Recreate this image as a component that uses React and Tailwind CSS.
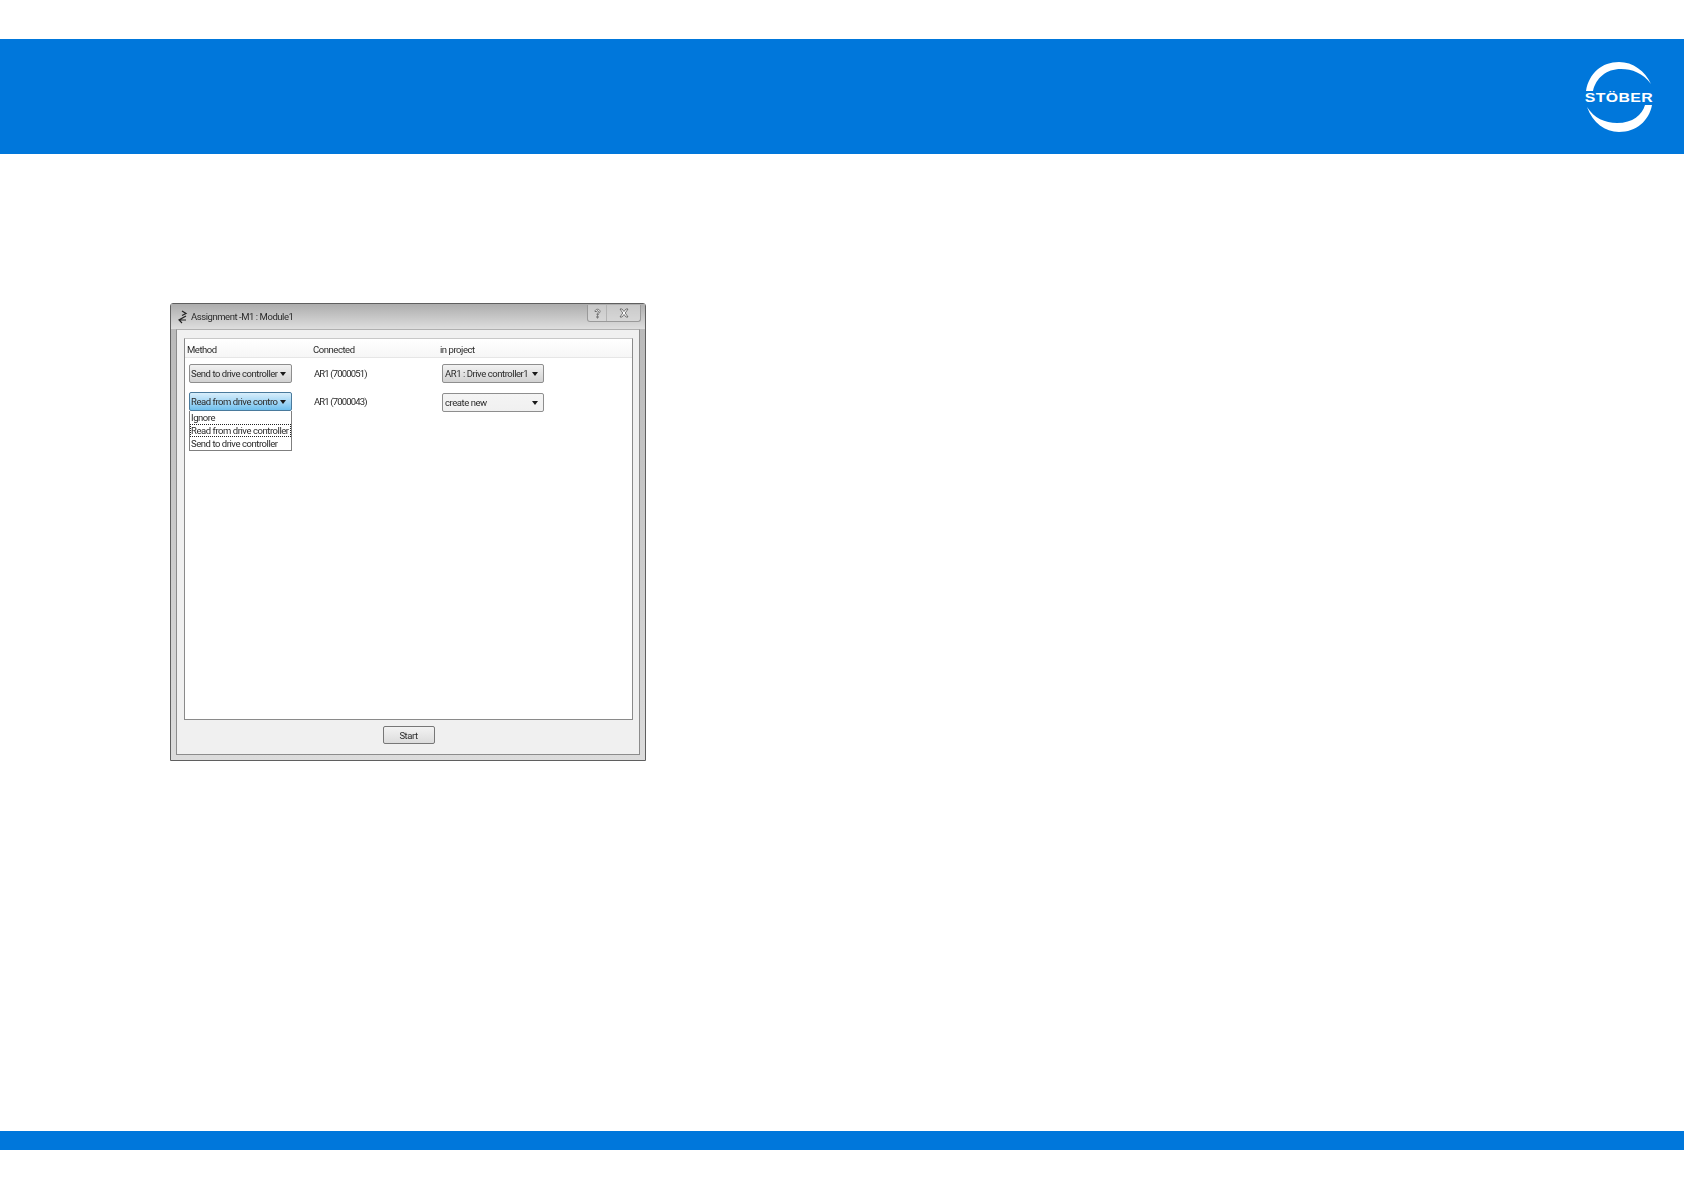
const uiFont = "font-['Roboto',sans-serif] text-[9.5px] leading-none text-[#2a2a2a] tracking-[-0.45px]";

const Caret = () => (
  <svg width="6" height="4" viewBox="0 0 6 4" className="shrink-0">
    <path d="M0 0h6L3 4z" fill="#1a1a1a" />
  </svg>
);

const Select = ({ label, active, plain, project }) => (
  <div
    className={`relative flex items-center justify-between h-[19px] pr-[5px] rounded-[2px] border ${
      project ? "w-[102px] pl-[2px]" : "w-[103px] pl-[1px]"
    } ${plain ? "mt-[2px]" : ""} ${
      active
        ? "border-[#4a7a9c] bg-gradient-to-b from-[#d8eefb] to-[#6fc0ee]"
        : plain
          ? "border-[#8e8e8e] bg-gradient-to-b from-[#f4f4f4] to-[#f0f0f0]"
          : "border-[#8e8e8e] bg-gradient-to-b from-[#f2f2f2] to-[#d2d2d2]"
    }`}
  >
    <span className="whitespace-nowrap">{label}</span>
    <Caret />
  </div>
);

const Row = ({ method, connected, project, active, plain, children }) => (
  <div className="grid grid-cols-[125px_128px_1fr] grid-rows-[19px] items-center h-[19px]">
    <div className="relative">
      <Select label={method} active={active} />
      {children}
    </div>
    <div className="tracking-[-0.85px]">{connected}</div>
    <Select label={project} plain={plain} project />
  </div>
);

const Logo = () => (
  <svg width="72" height="72" viewBox="0 0 72 72" className="overflow-visible">
    <path d="M3 30C6 12 19 1 36 1c14 0 26 9 32 22C60 12 49 8 38 8 23 8 13 17 10 30z" fill="#fff" />
    <path d="M69 44c-3 16-16 27-33 27C22 71 10 62 4 46c7 11 18 16 30 16 16 0 25-8 28-18z" fill="#fff" />
    <text transform="translate(36 40.5) scale(1.22 1)" textAnchor="middle" fill="#fff" fontFamily="'Liberation Sans', sans-serif" fontWeight="700" fontSize="13" letterSpacing="0.3">
      STÖBER
    </text>
  </svg>
);

const TitleIcon = () => (
  <svg width="11" height="14" viewBox="0 0 11 14" className="shrink-0">
    <path d="M5 1l4 2.5L5 5.5M9 6 2 10l3 3M2 10h7" fill="none" stroke="#222" strokeWidth="1.2" />
  </svg>
);

const Window = () => (
  <div className={`ml-[170px] mt-[149px] w-[476px] h-[458px] flex flex-col border border-[#5f5f5f] rounded-t-[3px] bg-gradient-to-b from-[#b8b8b8] to-[#dcdcdc] ${uiFont} blur-[0.3px]`}>
    <div className="flex items-center justify-between h-[25px] pl-[6px] pr-[4px] shrink-0 bg-gradient-to-b from-[#adadad] to-[#dedede]">
      <div className="flex items-center gap-[3px]">
        <TitleIcon />
        <span className="whitespace-nowrap">Assignment -M1 : Module1</span>
      </div>
      <div className="flex self-start h-[17px] mt-[1px] border border-[#9a9a9a] border-t-0 rounded-b-[3px] bg-[#dcdcdc]/60">
        <div className="w-[19px] flex items-center justify-center border-r border-[#b4b4b4]">
          <svg width="7" height="11" viewBox="0 0 7 11">
            <path d="M1 3.5C1 .5 6 .5 6 3.5 6 5.5 4 5 4 7H3C3 5 4.5 5 4.5 3.5 4.5 2.3 2.5 2.3 2.5 3.5zM3 8h1v2H3z" fill="#fff" stroke="#555" strokeWidth="0.8" />
          </svg>
        </div>
        <div className="w-[33px] flex items-center justify-center">
          <svg width="10" height="10" viewBox="0 0 10 10">
            <path d="M1 1h2l2 2.5L7 1h2L6.2 5 9 9H7L5 6.5 3 9H1l2.8-4z" fill="#fff" stroke="#555" strokeWidth="0.8" />
          </svg>
        </div>
      </div>
    </div>
    <div className="flex-1 mx-[5px] mb-[5px] flex flex-col border border-[#8c8c8c] border-t-[#b0b0b0] bg-[#f0f0f0] pt-[8px] pl-[7px] pr-[6px]">
      <div className="h-[382px] shrink-0 border border-[#8a8a8a] border-t-[#c8c8c8] bg-white flex flex-col">
        <div className="grid grid-cols-[126px_127px_1fr] items-center h-[19px] pl-[2px] pt-[3px] border-b border-[#e6e6e6] bg-gradient-to-b from-white to-[#f6f6f6]">
          <div>Method</div>
          <div>Connected</div>
          <div>in project</div>
        </div>
        <div className="flex flex-col gap-[9px] pt-[6px] pl-[4px]">
          <Row method="Send to drive controller" connected="AR1 (7000051)" project="AR1 : Drive controller1" />
          <Row method="Read from drive contro" connected="AR1 (7000043)" project="create new" active plain>
            <div className="absolute left-0 top-[19px] w-[103px] h-[40px] border border-[#7f7f7f] border-t-0 bg-white flex flex-col">
              <div className="h-[13px] pl-[1px] flex items-center">Ignore</div>
              <div className="h-[13px] flex items-center border border-dotted border-[#222] whitespace-nowrap">Read from drive controller</div>
              <div className="h-[13px] pl-[1px] flex items-center whitespace-nowrap">Send to drive controller</div>
            </div>
          </Row>
        </div>
      </div>
      <div className="flex justify-center pt-[6px]">
        <div className="w-[52px] h-[18px] pt-[1px] flex items-center justify-center rounded-[2px] border border-[#777] bg-gradient-to-b from-[#f3f3f3] to-[#dcdcdc]">
          Start
        </div>
      </div>
    </div>
  </div>
);

export default function App() {
  return (
    <div className="h-[1190px] bg-white flex flex-col pt-[39px] overflow-hidden">
      <div className="h-[115px] shrink-0 bg-[#0077db] flex items-center justify-end pr-[29px]">
        <Logo />
      </div>
      <Window />
      <div className="mt-auto mb-[40px] h-[19px] shrink-0 bg-[#0077db]" />
    </div>
  );
}
